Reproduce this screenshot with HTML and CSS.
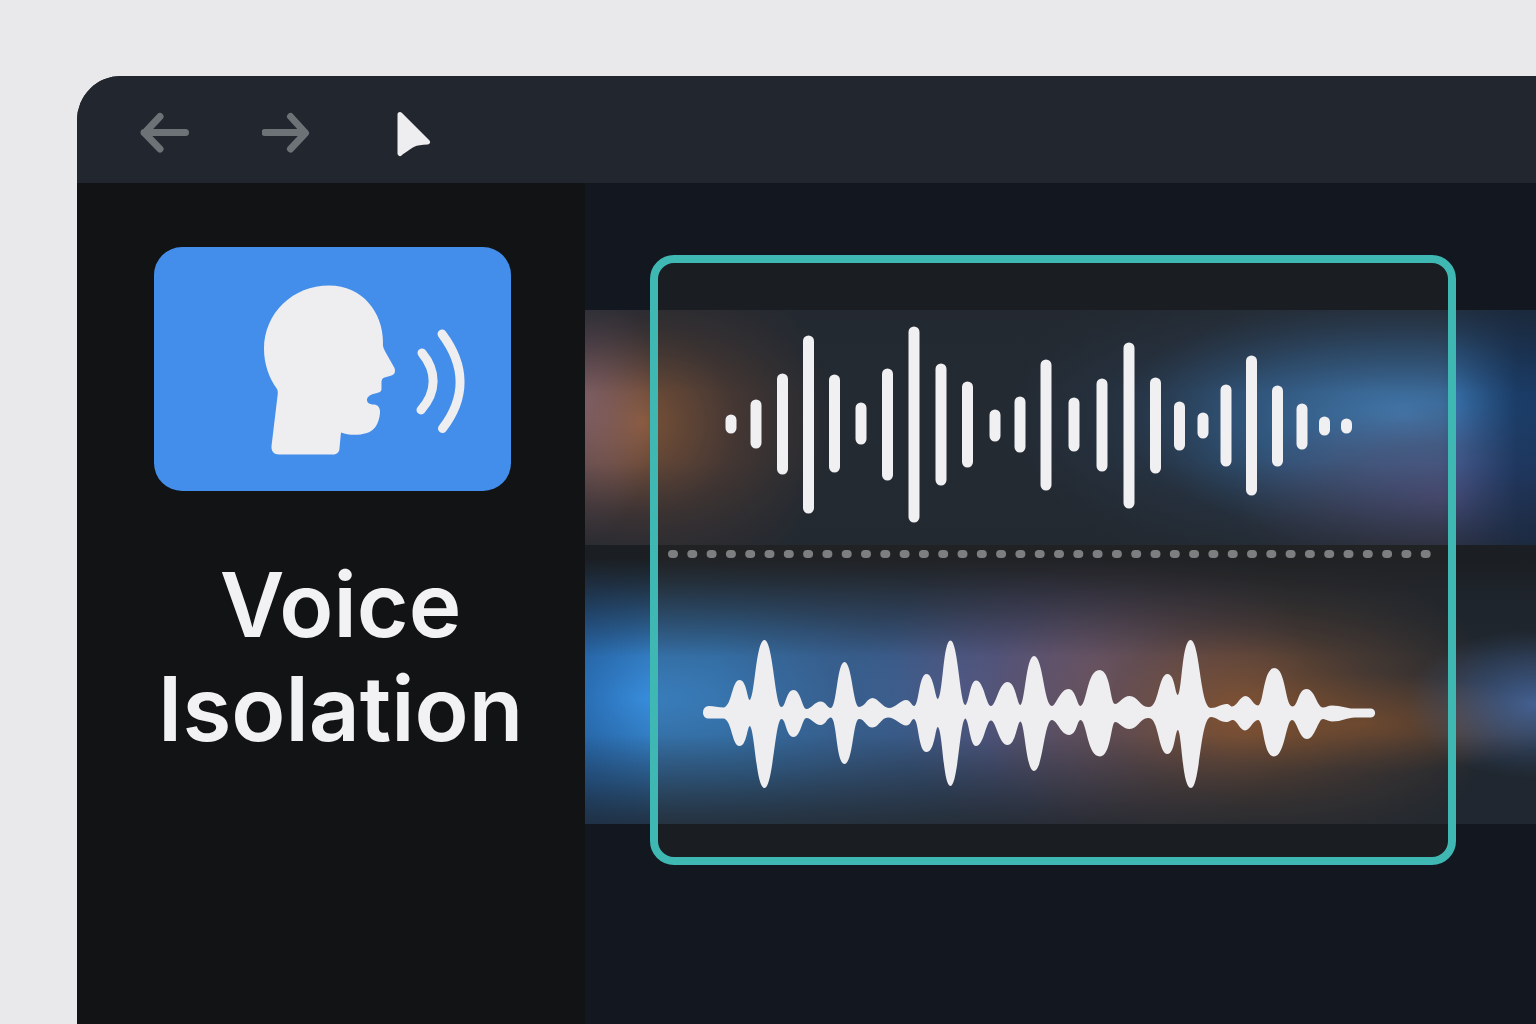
FILE: index.html
```html
<!DOCTYPE html>
<html lang="en">
<head>
    <meta charset="UTF-8">
    <meta name="viewport" content="width=device-width, initial-scale=1.0">
    <title>Voice Isolation</title>
    <link rel="stylesheet" href="styles.css">
</head>
<body>
    <div class="window">
        <!-- Toolbar -->
        <header class="toolbar">
            <button class="tool-btn" type="button" aria-label="Back">
                <svg viewBox="0 0 50 48"><path d="M45.500 23.500H4M20 7.500L4.500 24L20 40"/></svg>
            </button>
            <button class="tool-btn" type="button" aria-label="Forward">
                <svg viewBox="0 0 50 48"><path d="M3 23.500H43M28.500 7.500L43.500 24L28.500 40"/></svg>
            </button>
            <button class="tool-btn pointer" type="button" aria-label="Select">
                <svg viewBox="0 0 50 48"><path d="M16 5.500L43.500 33C29 33.500 27 36 16 44.500Z"/></svg>
            </button>
        </header>

        <div class="workspace">
            <!-- Sidebar -->
            <aside class="sidebar">
                <button class="effect-tile" type="button" aria-label="Voice Isolation">
                    <svg viewBox="154 247 357 244">
                        <path class="solid" d="M277 389C269 378 264 364 264 349C264 313 293 285.500 329 285.500C363 285.500 383 313 383 342C382.500 347 384 349 386 353L394.500 368C396 373 394 375 390 376L384.500 377.500C381.500 378.500 381.500 381 381.500 384V389C381.500 392 379 392.500 375 393.500C370 394.500 367 397 367 400C367 403 370 404.500 374 404.500C378 405 380.500 408 380 413C379 424 374 431 367 433C357 436 348 435 341 432.500L339.500 448C339.500 452 337 454.500 333 454.500H279C274 454.500 271 451 271.500 446L277.500 396C278 393 278 391 277 389Z"/>
                        <path class="wave" d="M422 353C437 371 437 392 421 410"/>
                        <path class="wave" d="M442 334C466 366 466 398 442.500 428.500"/>
                    </svg>
                </button>
                <h1 class="effect-name">Voice Isolation</h1>
            </aside>

            <!-- Timeline -->
            <main class="timeline">
                <div class="tracks">
                    <div class="track-voice"></div>
                    <div class="track-mix"></div>
                </div>

                <section class="selection" aria-label="Selected clip">
                    <svg class="bars" viewBox="658 310 790 235">
                        <path d="M731 420v8M756 405v38M782.500 379v90M808.500 341v167M834.500 380v87M861 408v31M887.500 374v101M914 332v185M941 369v111M967.500 387v75M995 415v21M1020 402v45M1046 365v120M1074 403v43M1102 384v82M1129 348v155M1155.500 383v85M1179.500 407v38M1203 418v15M1226 390v71M1251.500 361v129M1277.500 391v70M1302 409v35M1324.500 422v8M1346.500 424v4"/>
                    </svg>
                    <svg class="divider" viewBox="658 545 790 18">
                        <path d="M672 554H1430"/>
                    </svg>
                    <svg class="waveform" viewBox="658 563 790 261">
                        <path d="M709 706C714 706 718 707.500 724 707.500C732 705 732 680 739.500 680S747 700 750 700C755 694 756 640 764.500 640S775 707 781.500 707C786 707 786 690 793.500 690S802 709 806.500 709S815 701.500 820.500 701.500S827 708 831 708C837 706 837 662 844.500 662S853 707 859 707S867 698 872.500 698S883 708 889 708S901 700 906 700S911 706 914.500 706C919 704 919 674 926.500 674S935 699 938 699C943 694 943 640.500 950.500 640.500S960 705 965.500 705C969 703 970 680.500 976 680.500C984 680.500 986 706 991 706C996 706 999 682 1007.500 682C1016 682 1017 705 1020.500 705C1025 702 1026 656 1034 656C1043 656 1044 706 1052 706C1056 706 1060 689 1068.500 689C1076 689 1077 706 1080.500 706C1087 704 1087 670 1099.500 670C1111 670 1110 704 1115 704C1119 704 1123 696 1129.500 696C1138 696 1140 707 1148 707C1159 709 1158 674 1167.500 674C1175 674 1175 695 1178 695C1182 690 1182 640 1190.500 640C1200 640 1200 708 1211 708C1217 708 1221 704 1226.500 704C1230 704 1230 706.500 1232 706.500C1237 706.500 1240 696 1245.500 696C1251 696 1253 705.500 1258 705.500C1264 704 1263 668 1274.500 668C1286 668 1285 706.500 1292.500 706.500C1298 706.500 1298 689 1306.500 689C1315 689 1317 707.500 1323 707.500C1326 707.500 1328 705.500 1332 705.500C1342 705.500 1347 709 1355 708.500H1371C1376.500 709 1376.500 717 1371 717.500H1355C1347 717.500 1342 721.500 1332 721.500C1328 721.500 1326 719 1323 719C1318 719 1315 739 1307 739C1299 739 1297 720 1292 720C1286 720 1285 756.500 1274 756.500C1263 756.500 1264 720 1258 720C1253 720 1250 730.500 1245 730.500C1240 730.500 1237 720 1233 720C1230 720 1230 722 1226 722C1220 722 1216 717 1211 717C1200 717 1200 788 1191 788C1182 788 1182 734 1178 730C1175 730 1175 754 1167.500 754C1158 754 1159 716 1148 718C1140 718 1138 729 1129.500 729C1123 729 1119 722 1115 722C1111 722 1111 756.500 1100 756.500C1087 756.500 1087 721 1080.500 720C1077 720 1077 735 1069 735C1061 735 1057 720 1052 720C1044 720 1043 771 1034 771C1026 771 1025 724 1020.500 721.500C1017 721.500 1016 745 1007.500 745C999 745 996 720.500 991 720.500C986 720.500 984 746 976 746C970 746 969 721 965.500 718.500C960 718.500 958 786 950.500 786S943 733 938 727C935 727 935 752 926.500 752S919 721 914 719C911 719 911 725.500 906 725.500S895 717.500 888 717.500S879 727.500 872.500 727.500S865 719 859 719C853 719 853 764 844.500 764S837 719 831 717.500C827 717.500 826 725 820.500 725S811 718 806.500 718S801 737 793.500 737S786 719 781.500 719C775 719 773 788 764.500 788S755 732 750 726C747 726 747 746 739.500 746S732 721 724 718.500H709C701 719 701 706 709 706Z"/>
                    </svg>
                </section>
            </main>
        </div>
    </div>
</body>
</html>
```
FILE: styles.css
```css
/* Global Styles */
* {
    box-sizing: border-box;
}

body {
    margin: 0;
    padding: 76px 0 0 77px;
    min-height: 100vh;
    display: flex;
    background-color: #e9e9eb;
    font-family: Inter, "Liberation Sans", sans-serif;
}

button {
    padding: 0;
    border: none;
    background: none;
    cursor: pointer;
}

svg {
    display: block;
}

.window {
    flex: 1;
    display: flex;
    flex-direction: column;
    overflow: hidden;
    border-top-left-radius: 44px;
    background-color: #131820;
}

/* Toolbar */
.toolbar {
    display: flex;
    align-items: center;
    gap: 72px;
    padding: 33px 63px 26px;
    background-color: #22272f;
}

.tool-btn svg {
    width: 50px;
    height: 48px;
    fill: none;
    stroke: #6d7277;
    stroke-width: 7;
    stroke-linecap: round;
    stroke-linejoin: round;
}

.pointer svg {
    fill: #eeedef;
    stroke: #eeedef;
    stroke-width: 5;
}

/* Workspace */
.workspace {
    flex: 1;
    display: flex;
}

/* Sidebar */
.sidebar {
    width: 508px;
    flex-shrink: 0;
    padding: 64px 58px 0 77px;
    background-color: #111315;
}

.effect-tile {
    display: block;
    width: 100%;
    max-width: 357px;
    overflow: hidden;
    border-radius: 28px;
    background-color: #438deb;
}

.effect-tile svg {
    width: 100%;
}

.effect-tile .solid {
    fill: #eeedef;
}

.effect-tile .wave {
    fill: none;
    stroke: #eeedef;
    stroke-width: 9;
    stroke-linecap: round;
}

.effect-name {
    margin: 62px 0 0;
    color: #f2f1f3;
    font-size: 89px;
    font-weight: 600;
    line-height: 104px;
    text-align: center;
}

/* Timeline: the selection is stacked on the tracks in one grid cell */
.timeline {
    flex: 1;
    min-width: 0;
    display: grid;
    align-items: start;
}

.tracks,
.selection {
    grid-area: 1 / 1;
}

.tracks {
    padding-top: 127px;
}

.track-voice {
    height: 235px;
    background:
        linear-gradient(rgba(31, 38, 48, 0.6), transparent 35%, transparent 65%, rgba(31, 38, 48, 0.5)),
        radial-gradient(ellipse 70px 140px at 0% 40%, rgba(145, 110, 130, 0.6), transparent),
        radial-gradient(ellipse 190px 190px at 6% 48%, rgba(155, 98, 60, 0.85), rgba(120, 75, 55, 0.45) 50%, transparent),
        linear-gradient(90deg, transparent 90%, rgba(16, 42, 80, 0.7) 98%),
        radial-gradient(ellipse 210px 95px at 90% 80%, rgba(100, 90, 150, 0.7), rgba(90, 80, 120, 0.4) 55%, transparent),
        radial-gradient(ellipse 400px 180px at 86% 45%, rgba(68, 135, 200, 1), rgba(52, 110, 170, 0.75) 40%, rgba(40, 75, 115, 0.3) 70%, transparent),
        #1f2833;
}

.track-mix {
    height: 279px;
    background:
        linear-gradient(#1b1e22 4%, rgba(29, 34, 41, 0.6) 18%, transparent 40%),
        linear-gradient(transparent 68%, rgba(30, 38, 48, 0.7)),
        linear-gradient(90deg, rgba(15, 60, 120, 0.35), transparent 8%),
        radial-gradient(ellipse 130px 75px at 100% 57%, rgba(75, 110, 170, 0.8), transparent),
        radial-gradient(ellipse 200px 50px at 82% 64%, rgba(150, 90, 45, 0.6), transparent),
        radial-gradient(ellipse 260px 175px at 69% 60%, rgba(155, 95, 52, 0.9), rgba(115, 78, 58, 0.55) 50%, transparent),
        radial-gradient(ellipse 210px 190px at 54% 47%, rgba(130, 105, 155, 0.85), rgba(110, 90, 135, 0.55) 50%, transparent),
        radial-gradient(ellipse 250px 190px at 40% 50%, rgba(80, 105, 170, 0.7), rgba(65, 90, 145, 0.4) 50%, transparent),
        radial-gradient(ellipse 580px 190px at 6% 55%, rgba(58, 145, 225, 1), rgba(50, 122, 190, 0.85) 45%, transparent),
        #20272f;
}

.selection {
    margin: 72px 80px 0 65px;
    padding: 47px 0 33px;
    border: 8px solid #3fb8b3;
    border-radius: 24px;
    background-color: rgba(56, 50, 44, 0.2);
}

.selection svg {
    width: 100%;
}

.bars path {
    stroke: #f0eff1;
    stroke-width: 11;
    stroke-linecap: round;
}

.divider path {
    stroke: #7d7e80;
    stroke-width: 8;
    stroke-linecap: round;
    stroke-dasharray: 2 17.300;
}

.waveform path {
    fill: #eeedef;
}
```
